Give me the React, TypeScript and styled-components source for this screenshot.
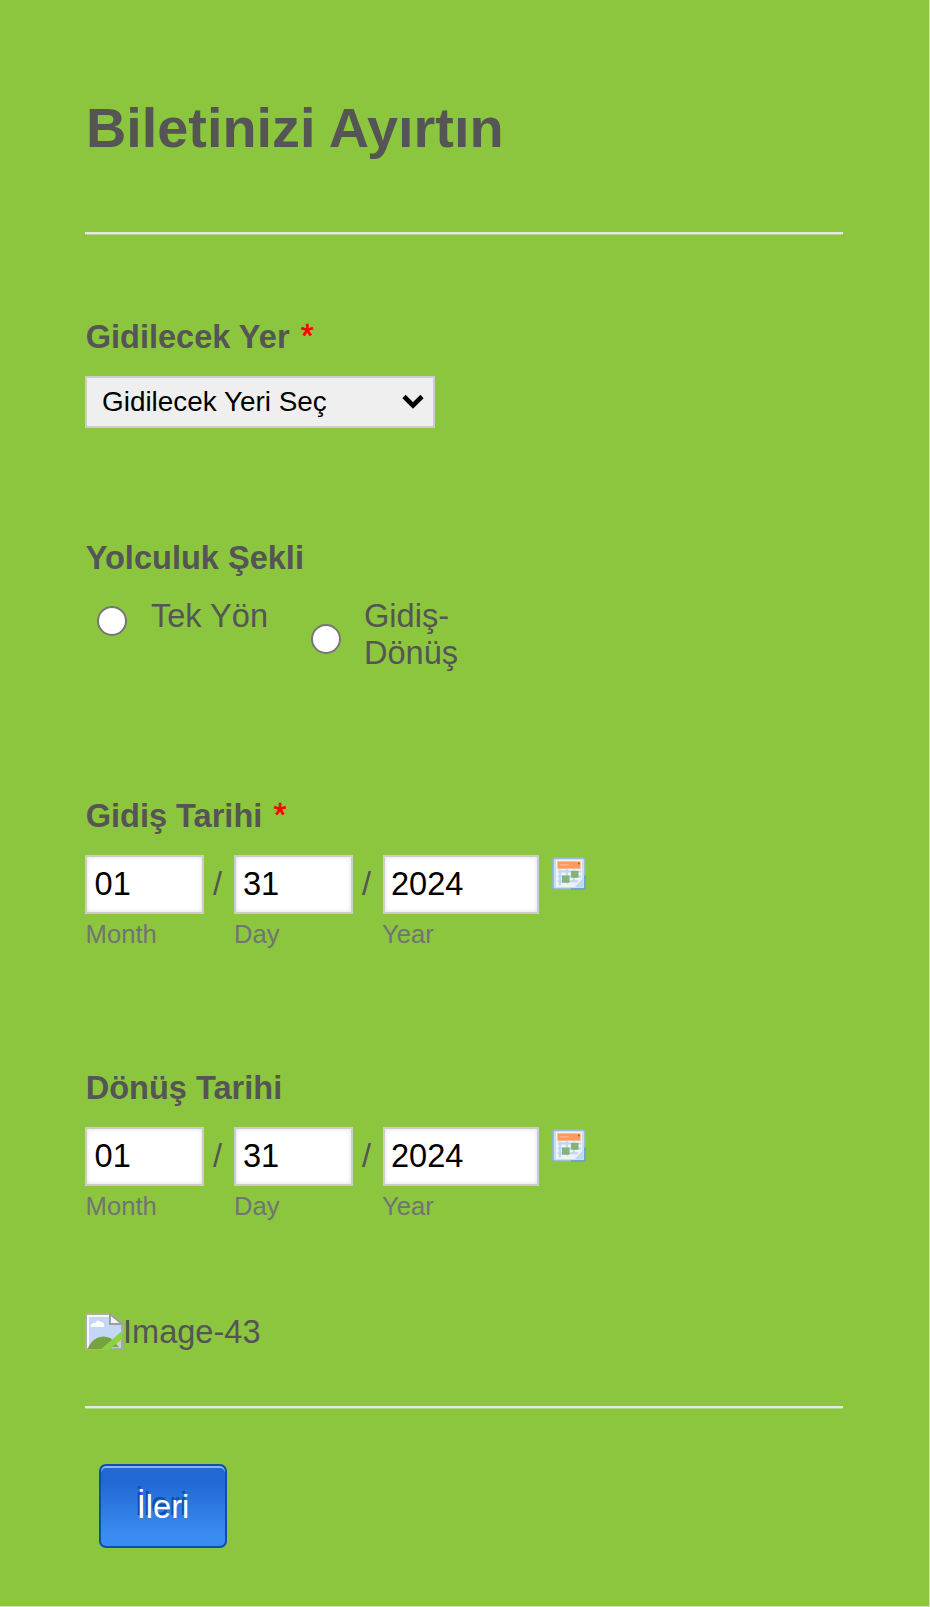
import React from "react";
import styled, { createGlobalStyle } from "styled-components";

const GlobalStyle = createGlobalStyle`
  * { box-sizing: border-box; }
  body {
    margin: 0;
    background: #8cc63f;
    color: #555;
    font-family: "Liberation Sans", Arial, sans-serif;
    font-size: 32.55px;
    line-height: 37px;
  }
`;

const Page = styled.form`
  height: 1607px;
  padding: 0 86px 0 85px;
  border: solid #cde6ab;
  border-width: 0 1px 1px 0;
  display: flex;
  flex-direction: column;
  align-items: flex-start;
`;

const Header = styled.header`
  width: 100%;
  height: 235px;
  padding-top: 96px;
  margin-bottom: 83px;
`;

const Title = styled.h1`
  margin: 0;
  padding-left: 1px;
  font-size: 55.8px;
  line-height: 64px;
`;

const Rule = styled.hr`
  width: 100%;
  height: 3px;
  margin: 72px 0 0;
  border: 0;
  background: linear-gradient(#e6e6e6 2px, #b3d585 2px);
`;

const BottomRule = styled(Rule)`
  margin-top: 56px;
`;

const Field = styled.section<{ $height: number }>`
  height: ${(p) => p.$height}px;
  width: 100%;
`;

const Label = styled.h2`
  margin: 0;
  padding-left: 0.7px;
  font-size: 32.55px;
  line-height: 38px;
  white-space: pre;
`;

const Required = styled.span`
  color: #f00;
  font-weight: 400;
  line-height: 1;
  vertical-align: 1px;
  margin-left: 11.5px;
  -webkit-text-stroke: 0.7px #f00;
`;

const SelectBox = styled.div`
  margin-top: 20px;
  width: 350px;
  height: 52px;
  padding: 0 9px 2px 15px;
  border: 2px solid #ccc;
  background: #efefef;
  color: #000;
  font-size: 27.9px;
  display: flex;
  align-items: center;
  justify-content: space-between;
`;

const Options = styled.div`
  display: flex;
  align-items: flex-start;
  padding: 21px 0 0 12px;
`;

const Option = styled.label<{ $width: number; $drop: number; $gap: number }>`
  display: flex;
  align-items: flex-start;
  width: ${(p) => p.$width}px;
  gap: ${(p) => p.$gap}px;
  input { margin-top: ${(p) => p.$drop}px; }
`;

const Radio = styled.input`
  appearance: none;
  flex: none;
  width: 30px;
  height: 30px;
  margin: 0;
  border: 2px solid #767676;
  border-radius: 50%;
  background: #fff;
`;

const DateRow = styled.div`
  display: flex;
  align-items: flex-start;
  margin-top: 20px;
`;

const DatePart = styled.div<{ $width: number; $inset: number }>`
  width: ${(p) => p.$width}px;
  input { padding-left: ${(p) => 7 + p.$inset}px; }
  div { margin-left: ${(p) => p.$inset}px; }
`;

const DateInput = styled.input`
  display: block;
  width: 100%;
  height: 59px;
  padding: 0 7px;
  border: 2px solid #ccc;
  border-radius: 0;
  background: #fff;
  box-shadow: inset 0 0 4px #ddd;
  color: #000;
  font: inherit;
`;

const SubLabel = styled.div`
  margin-top: 6px;
  font-size: 25.6px;
  line-height: 29px;
  color: #737373;
`;

const Slash = styled.span`
  width: 30px;
  padding-left: 9px;
  line-height: 59px;
`;

const CalendarIcon = styled.svg`
  margin: 2px 0 0 13px;
  width: 34px;
  height: 33px;
`;

const ImageRow = styled.div`
  display: flex;
  width: 100%;
  margin-top: 75px;
  height: 37px;
  span { padding-top: 1px; }
`;

const NextButton = styled.button`
  margin: 55px 0 0 14px;
  width: 128px;
  height: 84px;
  padding: 3px 0 0;
  border: 2px solid #0d4fb0;
  border-radius: 7px;
  background: linear-gradient(#2268d4 20%, #3a8cf0 85%);
  box-shadow: inset 0 2px 0 #86b5f0;
  color: #fff;
  font: inherit;
  text-shadow: -2px -3px 0 #0f4fae;
`;

function Calendar() {
  return (
    <CalendarIcon viewBox="0 0 34 34" preserveAspectRatio="none">
      <rect x="1" y="1" width="32" height="32" rx="2" fill="#c9dcf0" stroke="#8db4cf" strokeWidth="1.6" />
      <rect x="4" y="3" width="26" height="28" fill="#f0f1f2" />
      <rect x="5.5" y="4.5" width="23" height="7.5" fill="#ff9a5e" />
      <path d="M8 8h9" stroke="#ffb084" strokeWidth="1.5" />
      <rect x="26" y="6" width="1.5" height="1.5" fill="#d92d1b" />
      <path d="M6 15h23M6 20h23M6 25h20M8 13v16M15 13v14M22 13v13" stroke="#bed5f3" strokeWidth="2" />
      <path d="M19 14.5h7.5v7H19zM10 19h7.5v7.5H10z" fill="#82b478" />
      <path d="M23 31l8-9v9z" fill="#bfd7f2" />
      <path d="M33 19v12q0 2-2 2H19" fill="none" stroke="#659ed0" strokeWidth="1.5" />
    </CalendarIcon>
  );
}

function BrokenImage() {
  return (
    <svg width="38" height="37" viewBox="0 0 38 37">
      <path d="M1 1h25l11 11v8L19 36H1z" fill="#c4d8f5" stroke="#a8adaf" strokeWidth="2" />
      <path d="M3 35V3h22" fill="none" stroke="#f8faf7" strokeWidth="2" />
      <path d="M6 14q-1-4 4-4 2-4 6-1 4 0 3 5z" fill="#fff" />
      <path d="M3 35q3-7 9-10 6-3 13 0l3 2-10 9H3z" fill="#75a343" />
      <path d="M25 1v10h12z" fill="#f3f5f2" stroke="#98a0a0" strokeWidth="2" />
      <path d="M15 37l22-19v7L24 37z" fill="#8cd43f" />
      <path d="M25 36l12-10v10z" fill="#c5d6c7" />
      <path d="M25 36h12V27" fill="none" stroke="#a0aaa5" strokeWidth="2" />
      <path d="M27 34l4-3 3 3z" fill="#75a343" />
    </svg>
  );
}

function DateFields() {
  return (
    <DateRow>
      <DatePart $width={119} $inset={0.6}><DateInput defaultValue="01" /><SubLabel>Month</SubLabel></DatePart>
      <Slash>/</Slash>
      <DatePart $width={119} $inset={0}><DateInput defaultValue="31" /><SubLabel>Day</SubLabel></DatePart>
      <Slash>/</Slash>
      <DatePart $width={156} $inset={-1}><DateInput defaultValue="2024" /><SubLabel>Year</SubLabel></DatePart>
      <Calendar />
    </DateRow>
  );
}

export default function App() {
  return (
    <>
      <GlobalStyle />
      <Page>
        <Header>
          <Title>Biletinizi Ayırtın</Title>
          <Rule />
        </Header>
        <Field $height={221}>
          <Label>Gidilecek Yer<Required>*</Required></Label>
          <SelectBox>
            Gidilecek Yeri Seç
            <svg width="22" height="15" viewBox="0 0 22 15">
              <path d="M2 2.5l9 9 9-9" fill="none" stroke="#000" strokeWidth="4.6" />
            </svg>
          </SelectBox>
        </Field>
        <Field $height={258}>
          <Label>Yolculuk Şekli</Label>
          <Options>
            <Option $width={214} $drop={8} $gap={24}><Radio type="radio" name="trip" />Tek Yön</Option>
            <Option $width={160} $drop={26} $gap={23}><Radio type="radio" name="trip" />Gidiş-<br />Dönüş</Option>
          </Options>
        </Field>
        <Field $height={272}>
          <Label>Gidiş Tarihi<Required>*</Required></Label>
          <DateFields />
        </Field>
        <Field $height={169}>
          <Label>Dönüş Tarihi</Label>
          <DateFields />
        </Field>
        <ImageRow><BrokenImage /><span>Image-43</span></ImageRow>
        <BottomRule />
        <NextButton type="button">İleri</NextButton>
      </Page>
    </>
  );
}
